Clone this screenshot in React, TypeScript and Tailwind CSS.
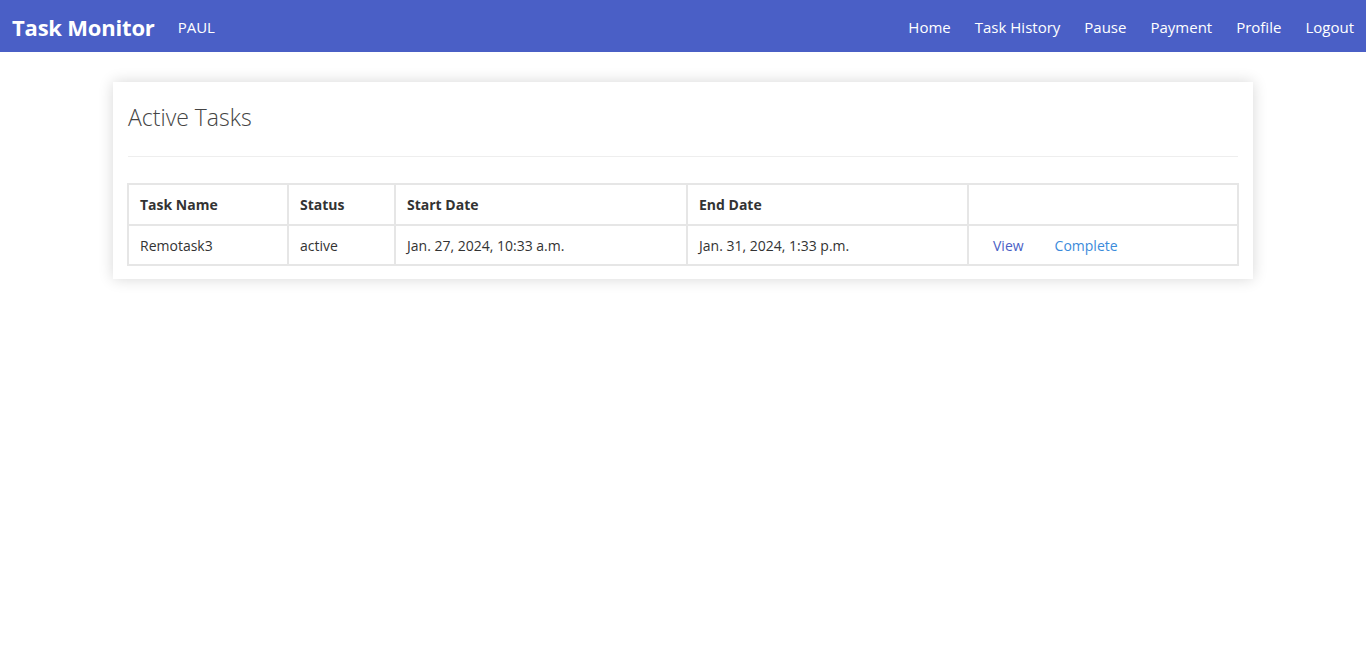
import React from "react";

export default function App() {
  const font = { fontFamily: '"Segoe UI", "Open Sans", "Noto Sans", sans-serif' };
  return (
    <div className="min-h-[645px] bg-white" style={font}>
      <nav className="h-[52px] bg-[#4a5fc6] flex items-center justify-between pl-3 pr-3 pt-[2px]">
        <div className="flex items-center">
          <span className="text-white font-bold text-[22px] tracking-[-0.2px]">Task Monitor</span>
          <span className="text-white text-[15px] ml-[23px]">PAUL</span>
        </div>
        <div className="flex items-center gap-[24px] text-white text-[15px]">
          <span>Home</span>
          <span>Task History</span>
          <span>Pause</span>
          <span>Payment</span>
          <span>Profile</span>
          <span>Logout</span>
        </div>
      </nav>
      <div className="flex justify-center pt-[30px]">
        <div className="w-[1140px] bg-white shadow-[0_0_14px_rgba(0,0,0,0.16)] px-[15px] pt-[20px] pb-[13px]">
          <h2 className="text-[23px] font-light text-[#444] leading-[30px]">Active Tasks</h2>
          <div className="mt-[24px] border-t border-[#eeeeee]" />
          <table className="mt-[26px] ml-[-1px] w-[1110px] border-collapse text-[14px] text-[#333] table-fixed">
            <colgroup>
              <col className="w-[160px]" />
              <col className="w-[107px]" />
              <col className="w-[292px]" />
              <col className="w-[281px]" />
              <col className="w-[270px]" />
            </colgroup>
            <thead>
              <tr className="h-[41px]">
                <th className="border-2 border-[#e6e6e6] text-left font-bold px-[11px]">Task Name</th>
                <th className="border-2 border-[#e6e6e6] text-left font-bold px-[11px]">Status</th>
                <th className="border-2 border-[#e6e6e6] text-left font-bold px-[11px]">Start Date</th>
                <th className="border-2 border-[#e6e6e6] text-left font-bold px-[11px]">End Date</th>
                <th className="border-2 border-[#e6e6e6] text-left font-bold px-[11px]"></th>
              </tr>
            </thead>
            <tbody>
              <tr className="h-[40px]">
                <td className="border-2 border-[#e6e6e6] px-[11px]">Remotask3</td>
                <td className="border-2 border-[#e6e6e6] px-[11px]">active</td>
                <td className="border-2 border-[#e6e6e6] px-[11px]">Jan. 27, 2024, 10:33 a.m.</td>
                <td className="border-2 border-[#e6e6e6] px-[11px]">Jan. 31, 2024, 1:33 p.m.</td>
                <td className="border-2 border-[#e6e6e6] pl-[24px]">
                  <span className="text-[#4a5fc6]">View</span>
                  <span className="ml-[31px] text-[#3b8bdb]">Complete</span>
                </td>
              </tr>
            </tbody>
          </table>
        </div>
      </div>
    </div>
  );
}
